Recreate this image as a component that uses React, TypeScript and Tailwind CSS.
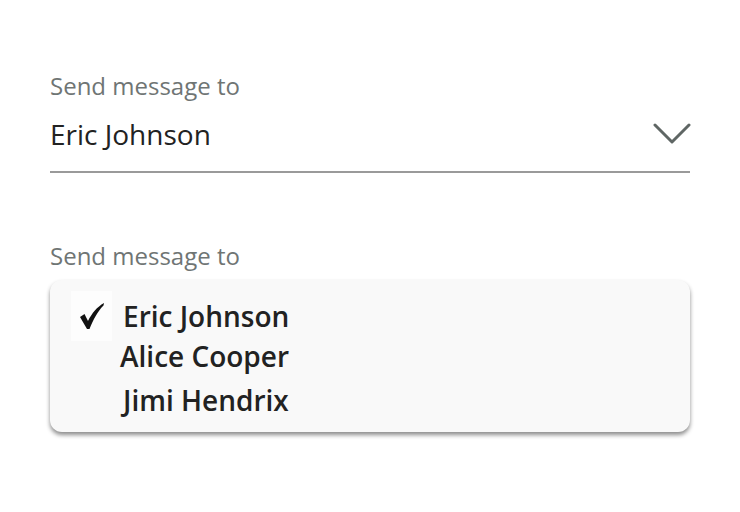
export default function App() {
  return (
    <div className="w-[740px] h-[512px] bg-white px-[50px] pt-[70px] font-['Open_Sans',sans-serif]">
      {/* Closed select */}
      <div className="text-[24px] leading-[32px] text-[#6f7574]">Send message to</div>
      <div className="flex items-center justify-between border-b-2 border-[#9a9a9a] h-[71px] pb-[5px]">
        <span className="text-[28px] leading-[36px] text-[#222]">Eric Johnson</span>
        <svg width="38" height="22" viewBox="0 0 38 22" className="mr-[-1px]" fill="none">
          <path d="M2 2 L19 19 L36 2" stroke="#5f6664" strokeWidth="3" strokeLinecap="round" strokeLinejoin="round" />
        </svg>
      </div>

      {/* Open select */}
      <div className="mt-[67px] text-[24px] leading-[32px] text-[#6f7574]">Send message to</div>
      <div className="mt-[8px] h-[152px] rounded-[12px] bg-[#f9f9f9] shadow-[0_3px_4px_rgba(0,0,0,0.45)] pt-[14px] pl-[21px]">
        <div className="flex items-center h-[44px]">
          <span className="w-[41px] h-[50px] bg-[#fdfdfd] flex items-center justify-center shrink-0">
            <svg width="30" height="32" viewBox="0 0 30 32">
              <path d="M3 17 L7.5 14 L11 21 C15 13 20 7 27 3 L26.5 5.5 C20.5 11.5 16 20 12.5 29 L10 29 Z" fill="#111" />
            </svg>
          </span>
          <span className="ml-[11px] text-[28px] leading-[36px] font-semibold text-[#222]">Eric Johnson</span>
        </div>
        <div className="ml-[49px] text-[28px] leading-[36px] font-semibold text-[#222]">Alice Cooper</div>
        <div className="ml-[52px] mt-[8px] text-[28px] leading-[36px] font-semibold text-[#222]">Jimi Hendrix</div>
      </div>
    </div>
  );
}
